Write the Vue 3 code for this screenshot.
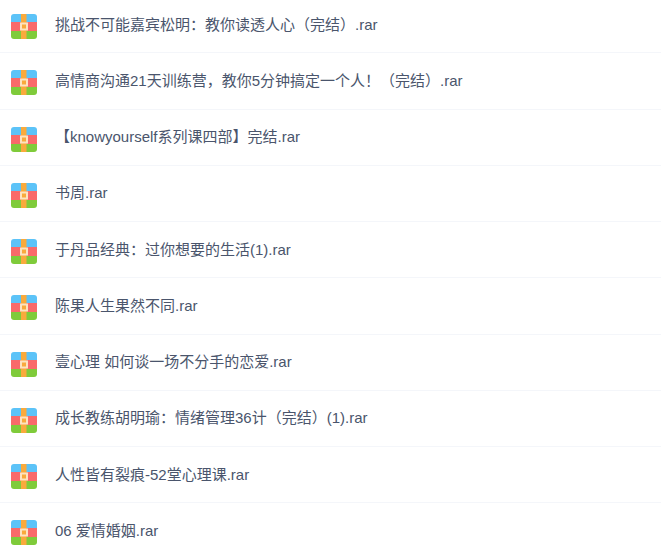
<script setup>
const files = [
  '挑战不可能嘉宾松明\uFF1A教你读透人心\uFF08完结\uFF09.rar',
  '高情商沟通21天训练营\uFF0C教你5分钟搞定一个人\uFF01\uFF08完结\uFF09.rar',
  '\u3010knowyourself系列课四部\u3011完结.rar',
  '书周.rar',
  '于丹品经典\uFF1A过你想要的生活(1).rar',
  '陈果人生果然不同.rar',
  '壹心理 如何谈一场不分手的恋爱.rar',
  '成长教练胡明瑜\uFF1A情绪管理36计\uFF08完结\uFF09(1).rar',
  '人性皆有裂痕-52堂心理课.rar',
  '06 爱情婚姻.rar'
]
</script>

<template>
  <ul class="list">
    <li v-for="name in files" :key="name" class="row">
      <svg class="icon" width="26" height="25" viewBox="0 0 26 25" aria-hidden="true">
        <clipPath id="rr"><rect x="0" y="0" width="26" height="25" rx="3" /></clipPath>
        <g clip-path="url(#rr)">
          <rect width="26" height="8" fill="#5cc3f8" />
          <rect y="8" width="26" height="9" fill="#f96a6a" />
          <rect y="17" width="26" height="8" fill="#7fcb3a" />
          <rect x="10" width="5.5" height="25" fill="#f9aa3c" />
        </g>
        <rect x="10" y="9.5" width="6" height="6" fill="#f9aa3c" stroke="#fde3c0" stroke-width="2" />
      </svg>
      <span class="name">{{ name }}</span>
    </li>
  </ul>
</template>

<style>
html, body { margin: 0; background: #fff; overflow: hidden; }
</style>

<style scoped>
.list {
  list-style: none;
  margin: -2.9px 0 0;
  padding: 0;
  width: 661px;
  font-family: "Liberation Sans", "Noto Sans CJK SC", sans-serif;
  font-size: 15px;
  color: #4a556c;
}
.row {
  display: flex;
  align-items: center;
  height: 55.25px;
  padding-left: 11px;
  border-bottom: 1px solid #f4f6fa;
}
.icon { flex: none; margin: 4px 18px 0 0; }
.name { white-space: nowrap; margin-bottom: 3px; }
</style>
